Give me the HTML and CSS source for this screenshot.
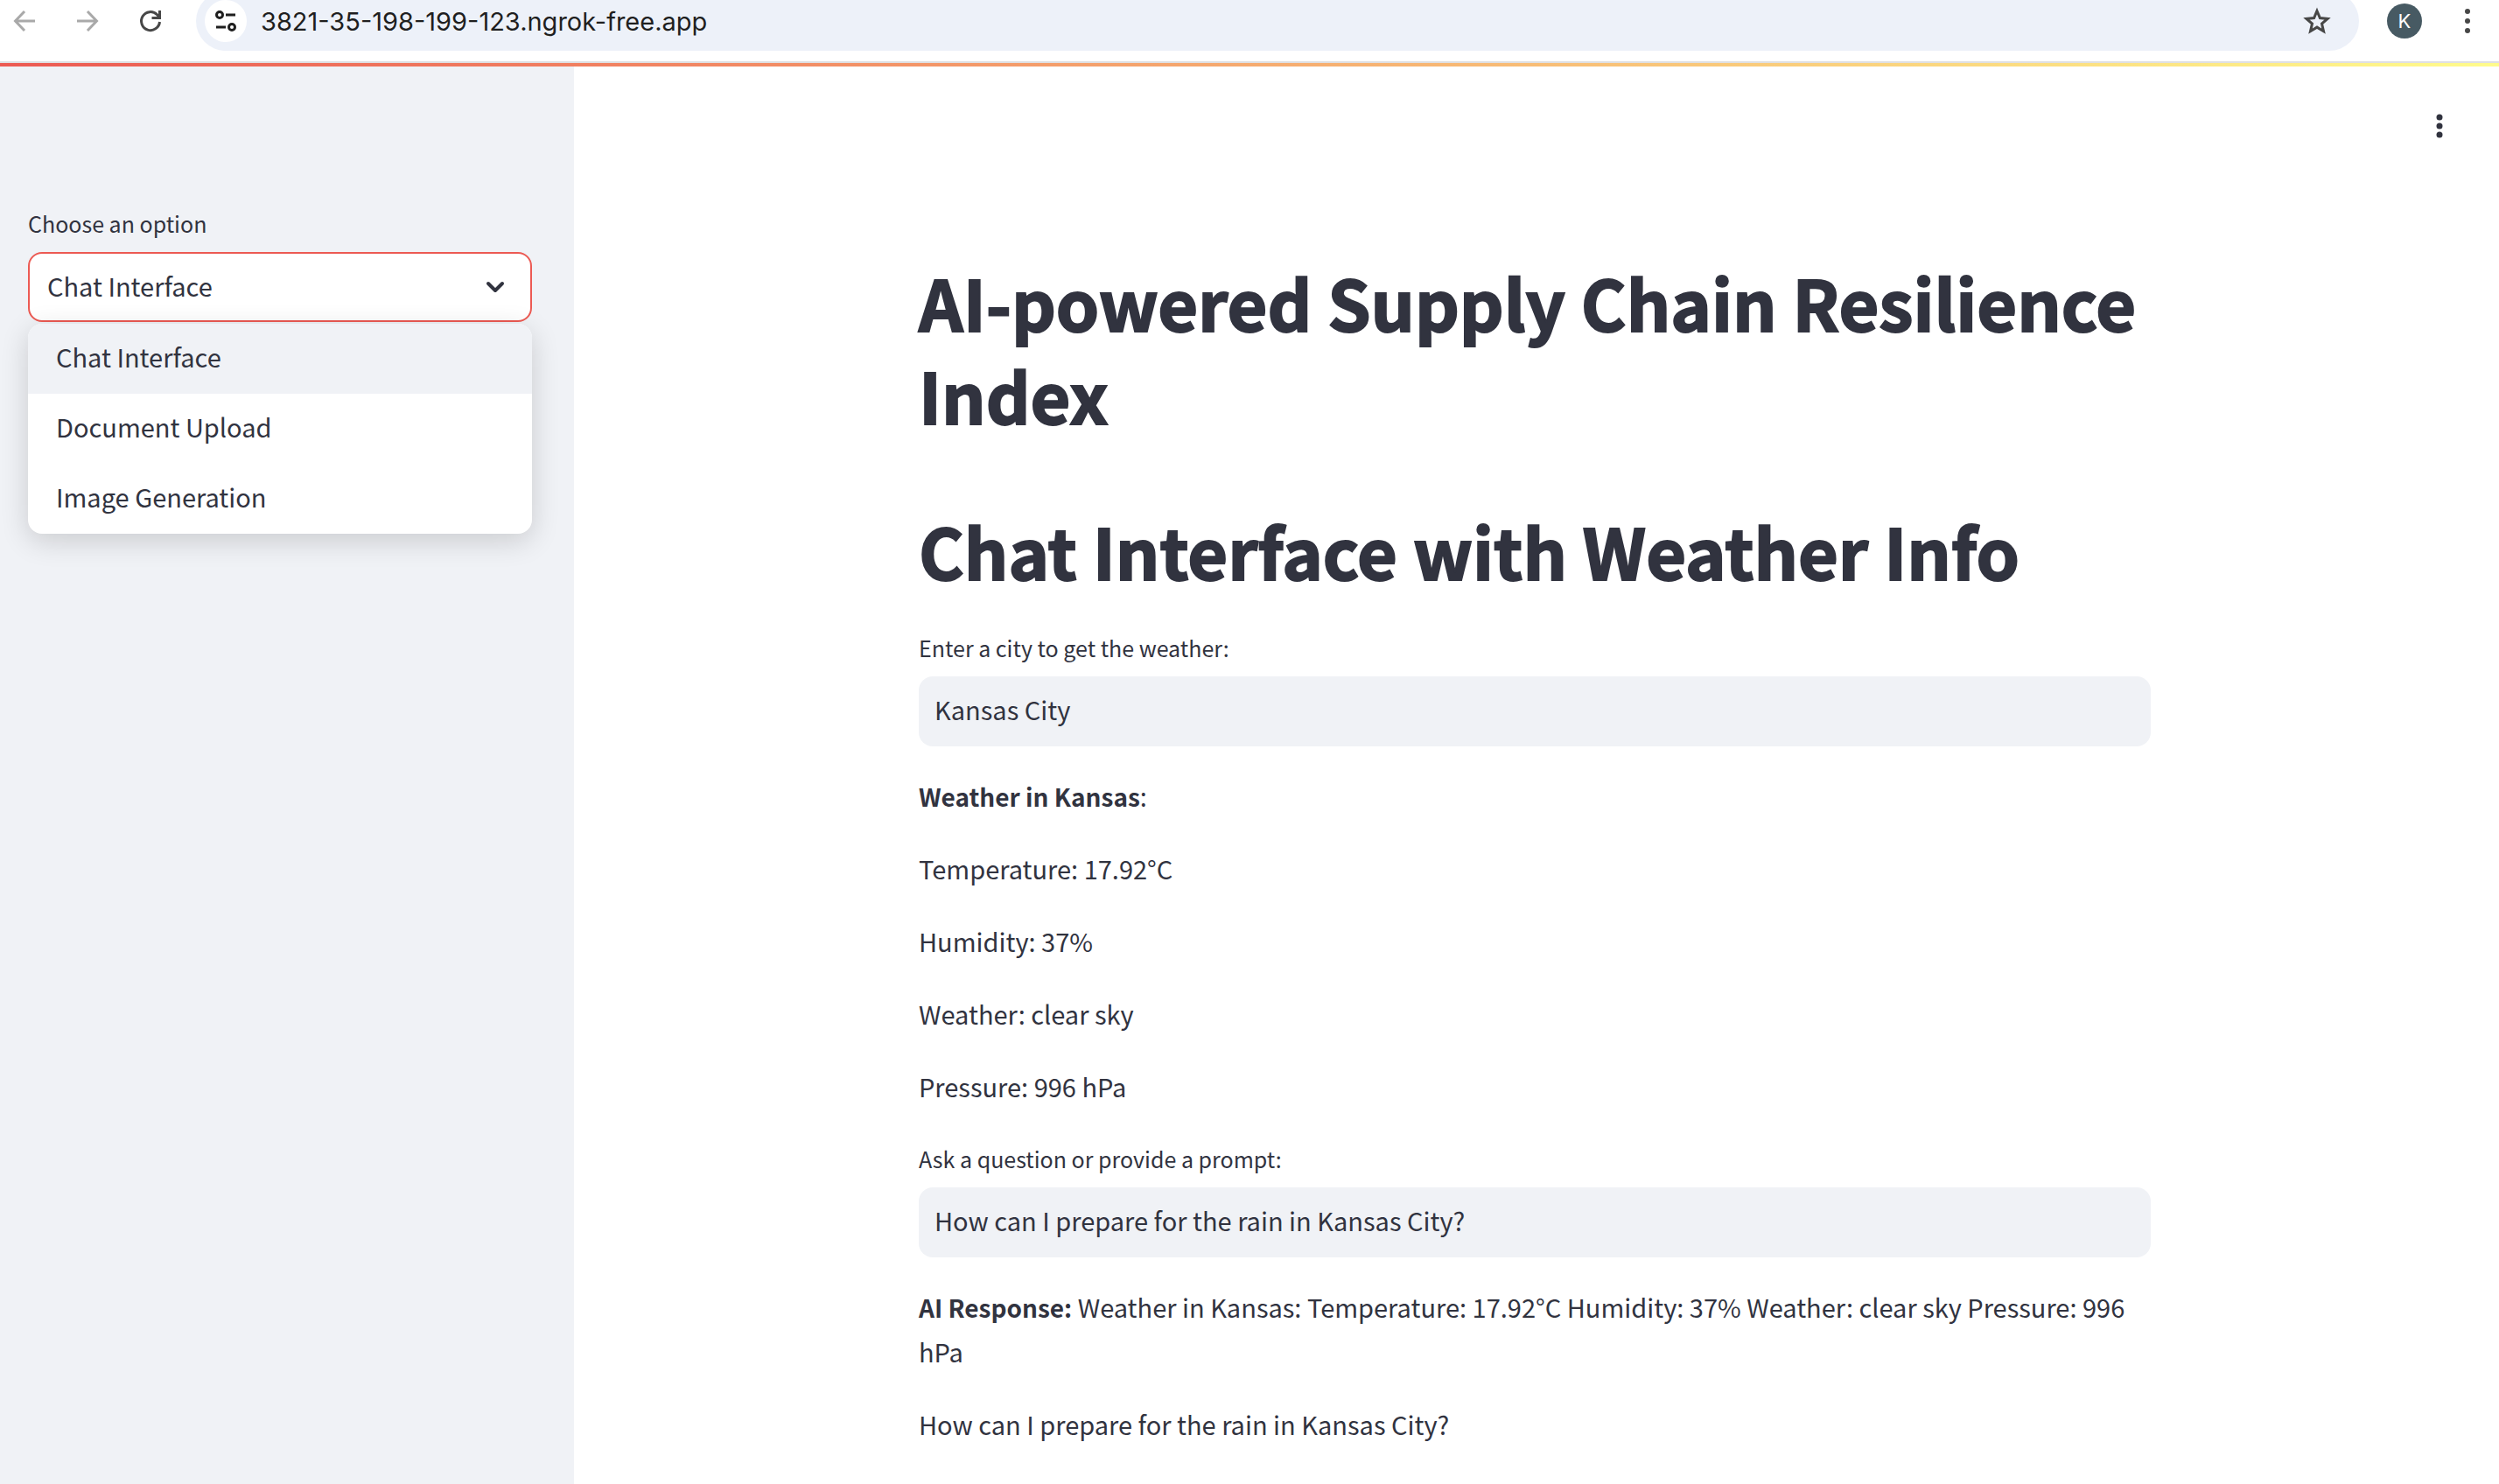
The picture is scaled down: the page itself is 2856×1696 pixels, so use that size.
FILE: index.html
```html
<!DOCTYPE html>
<html lang="en">
<head>
<meta charset="utf-8">
<title>AI-powered Supply Chain Resilience Index</title>
<link rel="stylesheet" href="styles.css">
</head>
<body>
<header class="toolbar">
  <nav class="nav" aria-label="Browser">
    <button class="icon-button" type="button" aria-label="Back" disabled>
      <svg width="32" height="32" viewBox="0 0 32 32" fill="none" stroke="#a9a9a9" stroke-width="3"><path d="M28 16H6M16 5 5.500 16 16 27"/></svg>
    </button>
    <button class="icon-button" type="button" aria-label="Forward" disabled>
      <svg width="32" height="32" viewBox="0 0 32 32" fill="none" stroke="#a9a9a9" stroke-width="3"><path d="M4 16h22M16 5l10.500 11L16 27"/></svg>
    </button>
    <button class="icon-button" type="button" aria-label="Reload">
      <svg width="32" height="32" viewBox="0 0 32 32" fill="none" stroke="#474747" stroke-width="3"><path d="M26.500 17A10.500 10.500 0 1 1 23.500 8.700L26 11.500M26.500 4v8.500h-9"/></svg>
    </button>
  </nav>
  <div class="address">
    <button class="site-info" type="button" aria-label="Site information">
      <svg width="28" height="28" viewBox="0 0 28 28" fill="none" stroke="#1f1f1f" stroke-width="3"><circle cx="7" cy="7" r="3.500"/><path d="M14 7h11M3 21h11"/><circle cx="21" cy="21" r="3.500"/></svg>
    </button>
    <input class="url" type="text" aria-label="Address" value="3821-35-198-199-123.ngrok-free.app">
    <button class="icon-button" type="button" aria-label="Bookmark">
      <svg width="32" height="32" viewBox="0 0 32 32" fill="none" stroke="#474747" stroke-width="3"><path d="M16 4.500l3.400 8.100 8.700.8-6.600 5.700 2 8.600-7.500-4.600-7.500 4.600 2-8.600-6.600-5.700 8.700-.8z"/></svg>
    </button>
  </div>
  <button class="avatar" type="button" aria-label="Profile">K</button>
  <button class="icon-button" type="button" aria-label="Browser menu">
    <svg width="32" height="32" viewBox="0 0 32 32" fill="#474747"><circle cx="16" cy="5" r="3"/><circle cx="16" cy="16" r="3"/><circle cx="16" cy="27" r="3"/></svg>
  </button>
</header>
<div class="decoration"></div>
<div class="app">
  <aside class="sidebar">
    <label class="label" for="page">Choose an option</label>
    <div class="picker">
      <select class="select" id="page">
        <option selected>Chat Interface</option>
        <option>Document Upload</option>
        <option>Image Generation</option>
      </select>
      <svg class="chevron" width="32" height="32" viewBox="0 0 32 32" fill="none" stroke="#31333f" stroke-width="4" stroke-linecap="round" stroke-linejoin="round"><path d="M8 12l8 8 8-8"/></svg>
      <ul class="menu">
        <li><button class="menu-item menu-item-active" type="button">Chat Interface</button></li>
        <li><button class="menu-item" type="button">Document Upload</button></li>
        <li><button class="menu-item" type="button">Image Generation</button></li>
      </ul>
    </div>
  </aside>
  <main class="main">
    <div class="app-bar">
      <button class="icon-button" type="button" aria-label="App menu">
        <svg width="32" height="32" viewBox="0 0 32 32" fill="#31333f"><circle cx="16" cy="6" r="3.500"/><circle cx="16" cy="16" r="3.500"/><circle cx="16" cy="26" r="3.500"/></svg>
      </button>
    </div>
    <div class="block">
      <h1 class="title">AI-powered Supply Chain Resilience Index</h1>
      <h1 class="title">Chat Interface with Weather Info</h1>
      <div class="field">
        <label class="label" for="city">Enter a city to get the weather:</label>
        <input class="input" id="city" type="text" value="Kansas City">
      </div>
      <div class="text">
        <p><strong>Weather in Kansas</strong>:</p>
        <p>Temperature: 17.92°C</p>
        <p>Humidity: 37%</p>
        <p>Weather: clear sky</p>
        <p>Pressure: 996 hPa</p>
      </div>
      <div class="field">
        <label class="label" for="prompt">Ask a question or provide a prompt:</label>
        <input class="input" id="prompt" type="text" value="How can I prepare for the rain in Kansas City?">
      </div>
      <div class="text">
        <p><strong>AI Response:</strong> Weather in Kansas: Temperature: 17.92°C Humidity: 37% Weather: clear sky Pressure: 996 hPa</p>
        <p>How can I prepare for the rain in Kansas City?</p>
      </div>
    </div>
  </main>
</div>
</body>
</html>
```
FILE: styles.css
```css
* {
  box-sizing: border-box;
}

body {
  display: flex;
  flex-direction: column;
  min-height: 100vh;
  margin: 0;
  background: #fff;
  color: #31333f;
  font-family: "Noto Sans CJK SC", "Noto Sans", sans-serif;
  font-size: 29px;
  line-height: 51px;
}

button,
input,
select {
  margin: 0;
  padding: 0;
  border: 0;
  background: none;
  color: inherit;
  font: inherit;
}

p,
h1,
ul {
  margin: 0;
  padding: 0;
}

strong {
  font-size: 28px;
  line-height: 1;
}

svg {
  display: block;
}

/* Browser toolbar, with its upper edge cut off by the window */
.toolbar {
  display: flex;
  align-items: center;
  margin-top: -10px;
  padding: 0 20px 12px 12px;
  border-bottom: 2px solid #dfe0e3;
}

.nav {
  display: flex;
  gap: 40px;
}

.icon-button {
  flex: none;
  width: 32px;
  height: 32px;
}

.address {
  display: flex;
  flex: 1;
  align-items: center;
  height: 68px;
  margin: 0 32px 0 36px;
  padding: 0 32px 0 10px;
  border-radius: 34px;
  background: #edf1f9;
}

.site-info {
  display: flex;
  align-items: center;
  justify-content: center;
  width: 48px;
  height: 48px;
  border-radius: 50%;
  background: #fff;
}

.url {
  flex: 1;
  height: 48px;
  padding-left: 16px;
  color: #1f1f1f;
  font-family: Inter, sans-serif;
}

.avatar {
  width: 40px;
  height: 40px;
  margin-right: 36px;
  border-radius: 50%;
  background: #475a63;
  color: #fff;
  font-family: Inter, sans-serif;
  font-size: 22px;
  line-height: 40px;
}

.decoration {
  height: 4px;
  background: linear-gradient(90deg, #ec5a53, #fffb8c);
}

.app {
  display: flex;
  flex: 1;
}

.sidebar {
  flex: none;
  width: 656px;
  padding: 156px 48px 0 32px;
  background: #f0f2f6;
}

.label {
  display: block;
  height: 48px;
  margin-bottom: 8px;
  font-size: 25px;
  line-height: 46px;
}

.picker {
  position: relative;
}

.select {
  display: block;
  width: 100%;
  height: 80px;
  padding: 0 20px 4px;
  border: 2px solid #ec5a53;
  border-radius: 16px;
  background: #fff;
  appearance: none;
}

.chevron {
  position: absolute;
  top: 24px;
  right: 26px;
}

.menu {
  position: absolute;
  top: 82px;
  left: 0;
  right: 0;
  overflow: hidden;
  border-radius: 16px;
  background: #fff;
  box-shadow: 0 8px 32px rgba(0, 0, 0, 0.16);
  list-style: none;
}

.menu-item {
  display: block;
  width: 100%;
  height: 80px;
  padding: 0 32px 6px;
  text-align: left;
}

.menu-item-active {
  background: #f0f2f6;
}

.main {
  flex: 1;
  padding: 52px 4px 40px 0;
}

.app-bar {
  display: flex;
  justify-content: flex-end;
  padding-right: 48px;
}

.block {
  display: flex;
  flex-direction: column;
  max-width: 1408px;
  margin: 132px auto 0;
}

.title {
  margin-bottom: 72px;
  font-size: 79px;
  font-weight: 700;
  line-height: 106px;
  -webkit-text-stroke: 2px #31333f;
}

.title + .title {
  margin-bottom: 35px;
}

.input {
  display: block;
  width: 100%;
  height: 80px;
  padding: 0 18px 6px;
  border-radius: 16px;
  background: #f0f2f6;
}

.text {
  display: flex;
  flex-direction: column;
  gap: 32px;
  padding: 31px 0 34px;
}
```
